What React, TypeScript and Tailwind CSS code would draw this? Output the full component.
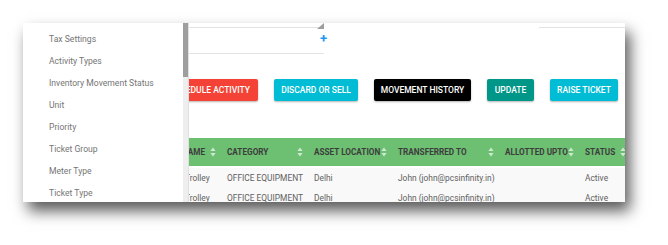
const menu = [
  "Tax Settings",
  "Activity Types",
  "Inventory Movement Status",
  "Unit",
  "Priority",
  "Ticket Group",
  "Meter Type",
  "Ticket Type",
];

const columns = [
  { label: "NAME", w: "w-[45px]", pl: "pl-[11px]" },
  { label: "CATEGORY", w: "w-[87px]", pl: "pl-[8px]" },
  { label: "ASSET LOCATION", w: "w-[84px]", pl: "pl-[8px]" },
  { label: "TRANSFERRED TO", w: "w-[107px]", pl: "pl-[8px]" },
  { label: "ALLOTTED UPTO", w: "w-[80px]", pl: "pl-[8px]" },
  { label: "STATUS", w: "w-[52px]", pl: "pl-[8px]" },
];

const rows = [
  ["Trolley", "OFFICE EQUIPMENT", "Delhi", "John (john@pcsinfinity.in)", "", "Active"],
  ["Trolley", "OFFICE EQUIPMENT", "Delhi", "John (john@pcsinfinity.in)", "", "Active"],
];

function SortIcon() {
  return (
    <svg width="6" height="10" viewBox="0 0 6 10" className="shrink-0">
      <path d="M3 0.5 L5.6 4 H0.4 Z" fill="#cfe8d0" />
      <path d="M3 9.5 L5.6 6 H0.4 Z" fill="#cfe8d0" />
    </svg>
  );
}

function Btn({ label, className }: { label: string; className: string }) {
  return (
    <div
      className={`h-[22px] flex items-center rounded-[2px] shadow-[0_1px_2px_rgba(0,0,0,0.3)] text-white text-[8.5px] font-medium whitespace-nowrap ${className}`}
    >
      {label}
    </div>
  );
}

export default function App() {
  return (
    <div className="w-[668px] h-[245px] bg-white pt-[23px] pl-[23px] font-['Roboto',sans-serif]">
      <div className="relative w-[602px] h-[179px] bg-white overflow-hidden shadow-[5px_9px_14px_rgba(0,0,0,0.65)]">
        {/* page content, partly under the menu */}
        <div className="absolute inset-0">
          <div className="flex h-[31px]">
            <div className="relative w-[301px] border-b border-[#e3e3e3]">
              <div className="h-[5px] border-b border-[#e3e3e3] relative">
                <svg width="7" height="6" viewBox="0 0 7 6" className="absolute right-0 top-0">
                  <path d="M7 0 V6 H0 Z" fill="#9e9e9e" />
                </svg>
              </div>
              <span className="absolute right-[-3px] top-[9px] text-[#2196f3] text-[13px] font-bold leading-none">+</span>
            </div>
            <div className="ml-auto w-[86px] h-[5px] border-b border-[#e3e3e3]" />
          </div>

          <div className="flex items-center gap-[16px] mt-[25px] ml-[106px]">
            <Btn label="SCHEDULE ACTIVITY" className="bg-[#f44336] w-[129px] justify-end pr-[8px]" />
            <Btn label="DISCARD OR SELL" className="bg-[#00bcd4] w-[84px] justify-center" />
            <Btn label="MOVEMENT HISTORY" className="bg-black w-[97px] justify-center" />
            <Btn label="UPDATE" className="bg-[#009688] w-[47px] justify-center" />
            <Btn label="RAISE TICKET" className="bg-[#00bcd4] w-[68px] justify-center" />
          </div>

          <div className="mt-[37px] ml-[151px]">
            <div className="flex h-[28px] bg-[#6dbf72] w-[460px]">
              {columns.map((c, j) => (
                <div
                  key={c.label}
                  className={`${c.w} ${j === 0 ? "pl-[8px]" : c.pl} shrink-0 flex items-center justify-between pr-[3px]`}
                >
                  <span className="text-[8.2px] font-bold text-[#3d3d3d] whitespace-nowrap">{c.label}</span>
                  <SortIcon />
                </div>
              ))}
            </div>
            <div className="mt-[2px]">
              {rows.map((r, i) => (
                <div key={i} className="flex h-[20px] bg-[#f9f9f9]">
                  {r.map((cell, j) => (
                    <div
                      key={j}
                      className={`${columns[j].w} ${columns[j].pl} shrink-0 flex items-center text-[8.4px] text-[#616161] whitespace-nowrap`}
                    >
                      {cell}
                    </div>
                  ))}
                </div>
              ))}
            </div>
          </div>
        </div>

        {/* dropdown menu over the content */}
        <div className="absolute left-0 top-0 bottom-0 w-[166px] bg-white flex">
          <div className="flex-1 pt-[5px] pl-[26px]">
            {menu.map((m) => (
              <div key={m} className="h-[22px] flex items-center text-[8.6px] text-[#757575] whitespace-nowrap">
                {m}
              </div>
            ))}
          </div>
          <div className="w-[6px] bg-[#eeeeee] border-r border-[#e0e0e0]">
            <div className="h-[54px] bg-[#9e9e9e]" />
          </div>
        </div>
      </div>
    </div>
  );
}
